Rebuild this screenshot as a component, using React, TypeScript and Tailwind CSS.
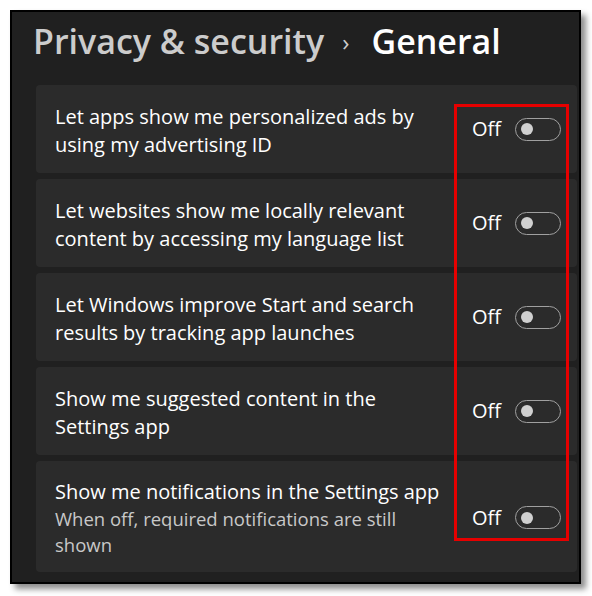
import React from "react";

const rows = [
  { title: ["Let apps show me personalized ads by", "using my advertising ID"] },
  { title: ["Let websites show me locally relevant", "content by accessing my language list"] },
  { title: ["Let Windows improve Start and search", "results by tracking app launches"] },
  { title: ["Show me suggested content in the", "Settings app"] },
];

const Toggle = () => (
  <div className="flex items-center gap-[14px]">
    <span className="text-[20px] text-white">Off</span>
    <div className="w-[46px] h-[23px] rounded-full border border-[#a0a0a0] flex items-center pl-[5px]">
      <div className="w-[12px] h-[12px] rounded-full bg-[#d0d0d0]" />
    </div>
  </div>
);

export default function App() {
  return (
    <div
      className="w-[592px] h-[596px] bg-white pl-[10px] pt-[10px]"
      style={{ fontFamily: '"Open Sans", "Noto Sans", sans-serif' }}
    >
      <div className="relative w-[571px] h-[574px] border-2 border-black bg-[#202020] shadow-[5px_5px_6px_rgba(0,0,0,0.45)] overflow-hidden">
        <div className="flex items-center h-[73px] pl-[21px] pb-[14px] text-[34px] font-semibold">
          <span className="text-[#cccccc]">Privacy &amp; security</span>
          <span className="text-[#cccccc] text-[24px] font-normal ml-[18px] mr-[22px]">›</span>
          <span className="text-white">General</span>
        </div>
        <div className="flex flex-col gap-[6px] pl-[24px] pr-[2px]">
          {rows.map((r, i) => (
            <div
              key={i}
              className="h-[88px] rounded-[4px] bg-[#2b2b2b] flex items-center justify-between pl-[19px] pr-[16px]"
            >
              <div className="text-[20px] leading-[28px] text-white pt-[3px]">
                <div>{r.title[0]}</div>
                <div>{r.title[1]}</div>
              </div>
              <Toggle />
            </div>
          ))}
          <div className="h-[111px] rounded-[4px] bg-[#2b2b2b] flex items-center justify-between pl-[19px] pr-[16px]">
            <div className="pt-[2px]">
              <div className="text-[20px] leading-[28px] text-white">
                Show me notifications in the Settings app
              </div>
              <div className="text-[18.5px] leading-[26px] text-[#c8c8c8]">
                <div>When off, required notifications are still</div>
                <div>shown</div>
              </div>
            </div>
            <div className="pt-[2px]">
              <Toggle />
            </div>
          </div>
        </div>
        <div className="absolute left-[442px] top-[92px] w-[115px] h-[437px] border-[3px] border-[#e60000]" />
      </div>
    </div>
  );
}
